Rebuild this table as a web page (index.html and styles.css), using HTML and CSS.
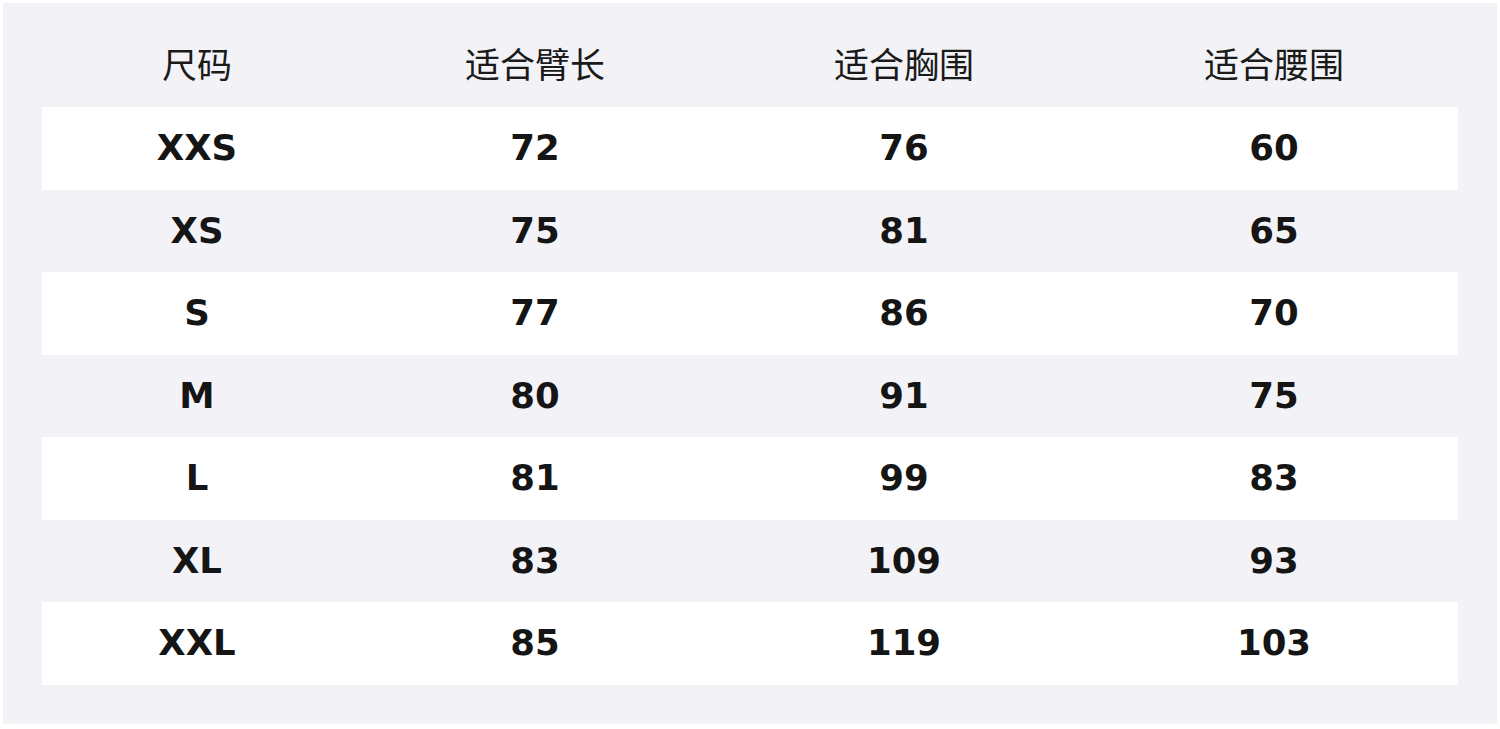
FILE: index.html
```html
<!DOCTYPE html>
<html lang="zh">
<head>
<meta charset="utf-8">
<title>尺码表</title>
<link rel="stylesheet" href="styles.css">
</head>
<body>
<div class="panel">
  <div class="table">
    <div class="row head">
      <div class="cell">尺码</div>
      <div class="cell">适合臂长</div>
      <div class="cell">适合胸围</div>
      <div class="cell">适合腰围</div>
    </div>
    <div class="row odd"><div class="cell">XXS</div><div class="cell">72</div><div class="cell">76</div><div class="cell">60</div></div>
    <div class="row"><div class="cell">XS</div><div class="cell">75</div><div class="cell">81</div><div class="cell">65</div></div>
    <div class="row odd"><div class="cell">S</div><div class="cell">77</div><div class="cell">86</div><div class="cell">70</div></div>
    <div class="row"><div class="cell">M</div><div class="cell">80</div><div class="cell">91</div><div class="cell">75</div></div>
    <div class="row odd"><div class="cell">L</div><div class="cell">81</div><div class="cell">99</div><div class="cell">83</div></div>
    <div class="row"><div class="cell">XL</div><div class="cell">83</div><div class="cell">109</div><div class="cell">93</div></div>
    <div class="row odd"><div class="cell">XXL</div><div class="cell">85</div><div class="cell">119</div><div class="cell">103</div></div>
  </div>
</div>
</body>
</html>
```

FILE: styles.css
```css
html, body {
  margin: 0;
  padding: 0;
  background: #ffffff;
}
body {
  padding: 3px;
  width: 1500px;
  height: 729px;
  box-sizing: border-box;
  font-family: "DejaVu Sans", "Noto Sans CJK SC", sans-serif;
  color: #151515;
}
.panel {
  background: #f3f3f7;
  width: 1494px;
  height: 721px;
  box-sizing: border-box;
  padding: 24px 39px 0 39px;
}
.table {
  display: flex;
  flex-direction: column;
  width: 1416px;
}
.row {
  display: grid;
  grid-template-columns: 310px 366px 372px 368px;
  height: 82.5px;
  align-items: center;
}
.row.odd {
  background: #ffffff;
}
.row.head {
  height: 80px;
  padding-bottom: 9px;
  box-sizing: border-box;
}
.cell {
  text-align: center;
  font-size: 35.5px;
  font-weight: 700;
  line-height: 1;
  padding-bottom: 1px;
}
.head .cell {
  font-family: "Noto Sans CJK SC", sans-serif;
  font-weight: 400;
  font-size: 35px;
  color: #1a1a1a;
}
```
